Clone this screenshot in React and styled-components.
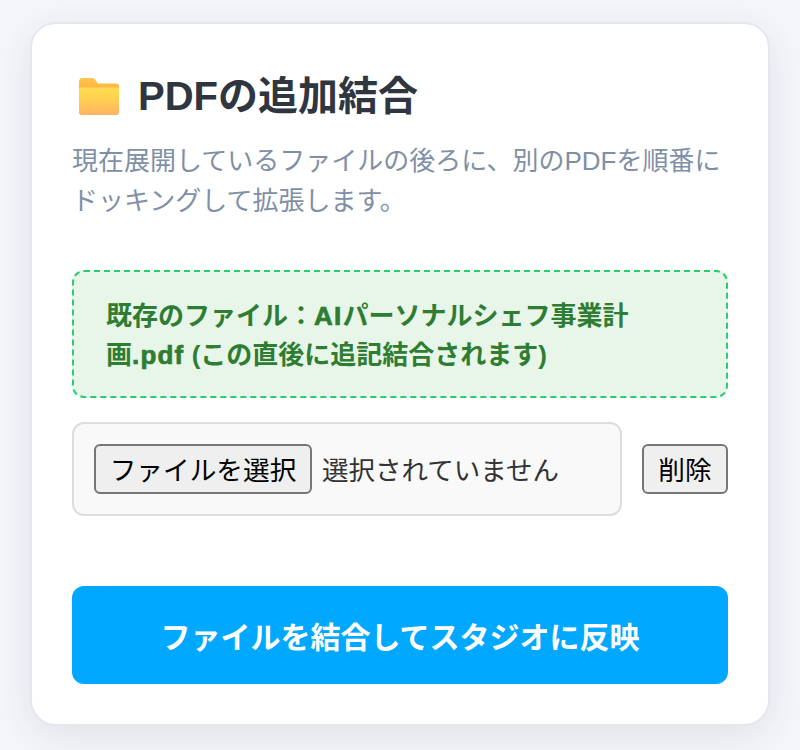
import React from "react"
import styled, { createGlobalStyle } from "styled-components"

const GlobalStyle = createGlobalStyle`
  html, body {
    margin: 0;
    padding: 0;
    background: #f5f6fa;
    font-family: "Liberation Sans", "Noto Sans CJK JP", sans-serif;
  }
  * { box-sizing: border-box; }
`

const FolderIcon = () => (
  <svg width="40" height="37" viewBox="0 0 40 37" aria-hidden="true">
    <defs>
      <linearGradient id="folderBack" x1="0" y1="0" x2="0" y2="1">
        <stop offset="0" stopColor="#ffc548" />
        <stop offset="1" stopColor="#ffb03e" />
      </linearGradient>
      <linearGradient id="folderFront" x1="0" y1="0" x2="0" y2="1">
        <stop offset="0" stopColor="#ffdc52" />
        <stop offset="0.4" stopColor="#ffd150" />
        <stop offset="1" stopColor="#ffb264" />
      </linearGradient>
    </defs>
    <path d="M0 3.500C0 1.600 1.300 0 3.200 0h10c1.100 0 2 .5 2.700 1.400L19 5.500h18c1.700 0 3 1.200 3 3V14H0z" fill="url(#folderBack)" />
    <path d="M0 11.500C0 10 1 9.500 2 9.500h36c1 0 2 .5 2 2V34.500c0 1.400-1 2.500-2.500 2.500h-35C1 37 0 35.900 0 34.500z" fill="url(#folderFront)" />
  </svg>
)

const App = () => (
  <>
    <GlobalStyle />
    <Page>
      <Card>
        <Title>
          <FolderIcon />
          <span>PDFの追加結合</span>
        </Title>
        <Lead>現在展開しているファイルの後ろに、別のPDFを順番にドッキングして拡張します。</Lead>
        <Notice>
          既存のファイル：<Heavy>AI</Heavy>パーソナルシェフ事業計画<Heavy>.pdf</Heavy> (この直後に追記結合されます)
        </Notice>
        <FileRow>
          <FileBox>
            <NativeButton $width="218px">ファイルを選択</NativeButton>
            <FileName>選択されていません</FileName>
          </FileBox>
          <NativeButton $width="86px">削除</NativeButton>
        </FileRow>
        <Submit>ファイルを結合してスタジオに反映</Submit>
      </Card>
    </Page>
  </>
)

const Page = styled.main`
  height: 750px;
  padding: 22px 30px;
  overflow: hidden;
`

const Card = styled.section`
  display: flex;
  flex-direction: column;
  height: 704px;
  padding: 40px;
  background: #fff;
  border: 2px solid #e5e7ee;
  border-radius: 26px;
  box-shadow: 0 10px 40px rgba(40, 50, 80, 0.1);
`

const Title = styled.h1`
  display: flex;
  align-items: center;
  gap: 19px;
  margin: 0 0 13px;
  padding-left: 7px;
  font-size: 40px;
  line-height: 64px;
  font-weight: 700;
  color: #2f3640;
`

const Lead = styled.p`
  margin: 0;
  font-size: 26px;
  line-height: 40px;
  color: #7f8fa6;
`

const Notice = styled.div`
  margin-top: 49px;
  padding: 25px 32px 21px;
  font-size: 26px;
  line-height: 39px;
  font-weight: 700;
  color: #2e7d32;
  background: #e8f5e9;
  border: 2px dashed #2ecc71;
  border-radius: 12px;
`

const Heavy = styled.span`
  letter-spacing: 1.2px;
  -webkit-text-stroke: 0.7px #2e7d32;
`

const FileRow = styled.div`
  display: flex;
  align-items: center;
  gap: 20px;
  margin-top: 24px;
`

const FileBox = styled.div`
  display: flex;
  flex: 1;
  align-items: center;
  gap: 10px;
  height: 94px;
  padding: 0 20px;
  background: #f9f9f9;
  border: 2px solid #dcdde1;
  border-radius: 12px;
`

const NativeButton = styled.button`
  width: ${props => props.$width};
  height: 50px;
  padding: 0 0 2px;
  font-family: inherit;
  font-size: 26.67px;
  color: #000;
  background: #efefef;
  border: 2px solid #767676;
  border-radius: 6px;
`

const FileName = styled.span`
  margin-bottom: 2px;
  font-size: 26.5px;
  color: #333;
`

const Submit = styled.button`
  height: 98px;
  margin-top: 70px;
  font-family: inherit;
  font-size: 30px;
  font-weight: 700;
  color: #fff;
  background: #00a8ff;
  border: 0;
  border-radius: 12px;
`

export default App
